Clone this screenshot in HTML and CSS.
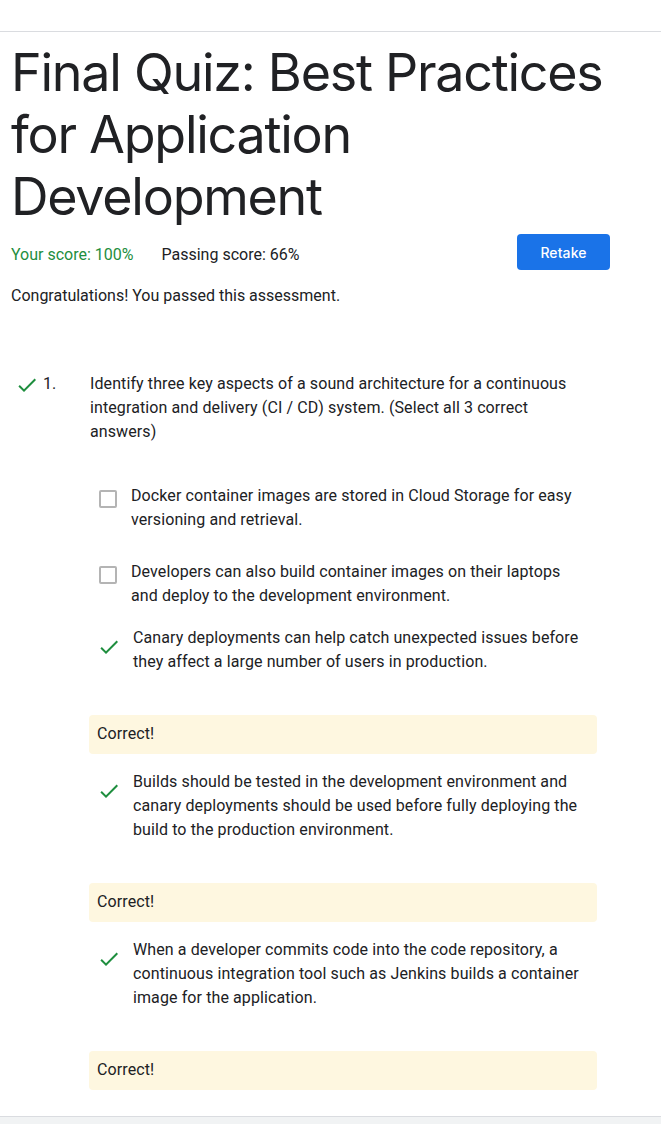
FILE: index.html
```html
<!DOCTYPE html>
<html lang="en">
<head>
<meta charset="utf-8">
<title>Final Quiz</title>
<link rel="stylesheet" href="styles.css">
</head>
<body>
<header class="topbar"></header>
<main class="page">
  <h1 class="title">Final Quiz: Best Practices for Application Development</h1>
  <div class="score-row">
    <div class="scores">
      <span class="score-yours">Your score: 100%</span>
      <span class="score-pass">Passing score: 66%</span>
    </div>
    <button class="btn-retake" type="button">Retake</button>
  </div>
  <p class="congrats">Congratulations! You passed this assessment.</p>

  <section class="question">
    <div class="q-head">
      <svg class="check q-check" viewBox="0 0 24 24" width="24" height="24"><path d="M9 16.17L4.83 12l-1.42 1.41L9 19 21 7l-1.41-1.41z"/></svg>
      <span class="q-num">1.</span>
    </div>
    <div class="q-body">
      <p class="q-text">Identify three key aspects of a sound architecture for a continuous integration and delivery (CI / CD) system. (Select all 3 correct answers)</p>
      <div class="options">
        <div class="opt unsel">
          <span class="opt-icon"><span class="box"></span></span>
          <span class="opt-text">Docker container images are stored in Cloud Storage for easy versioning and retrieval.</span>
        </div>
        <div class="opt unsel">
          <span class="opt-icon"><span class="box"></span></span>
          <span class="opt-text">Developers can also build container images on their laptops and deploy to the development environment.</span>
        </div>
        <div class="opt sel">
          <span class="opt-icon"><svg class="check" viewBox="0 0 24 24" width="24" height="24"><path d="M9 16.17L4.83 12l-1.42 1.41L9 19 21 7l-1.41-1.41z"/></svg></span>
          <span class="opt-text">Canary deployments can help catch unexpected issues before they affect a large number of users in production.</span>
        </div>
        <div class="feedback">Correct!</div>
        <div class="opt sel">
          <span class="opt-icon"><svg class="check" viewBox="0 0 24 24" width="24" height="24"><path d="M9 16.17L4.83 12l-1.42 1.41L9 19 21 7l-1.41-1.41z"/></svg></span>
          <span class="opt-text">Builds should be tested in the development environment and canary deployments should be used before fully deploying the build to the production environment.</span>
        </div>
        <div class="feedback">Correct!</div>
        <div class="opt sel">
          <span class="opt-icon"><svg class="check" viewBox="0 0 24 24" width="24" height="24"><path d="M9 16.17L4.83 12l-1.42 1.41L9 19 21 7l-1.41-1.41z"/></svg></span>
          <span class="opt-text">When a developer commits code into the code repository, a continuous integration tool such as Jenkins builds a container image for the application.</span>
        </div>
        <div class="feedback">Correct!</div>
      </div>
    </div>
  </section>
</main>
<footer class="bottombar"></footer>
</body>
</html>
```

FILE: styles.css
```css
* { box-sizing: border-box; }

html, body {
  margin: 0;
  padding: 0;
  background: #ffffff;
}

body {
  font-family: Roboto, "Liberation Sans", sans-serif;
  font-size: 16px;
  line-height: 24px;
  letter-spacing: 0.1px;
  color: #202124;
}

.topbar {
  height: 32px;
  border-bottom: 1px solid #dadce0;
}

.page {
  width: 661px;
  padding: 0 51px 26px 11px;
}

.title {
  margin: 10px 0 0;
  font-family: Inter, "Open Sans", sans-serif;
  font-weight: 400;
  font-size: 52px;
  line-height: 62px;
  letter-spacing: -1.25px;
  color: #202124;
}

.score-row {
  margin-top: 6px;
  display: flex;
  justify-content: space-between;
  align-items: flex-start;
}

.scores {
  padding-top: 9px;
  display: flex;
  gap: 28px;
  letter-spacing: 0;
}

.score-yours { color: #1e8e3e; }
.score-pass { color: #202124; }

.btn-retake {
  height: 36px;
  width: 93px;
  border: none;
  border-radius: 4px;
  background: #1a73e8;
  color: #ffffff;
  font-family: Inter, Roboto, sans-serif;
  font-weight: 500;
  font-size: 14px;
  letter-spacing: 0.1px;
  padding: 0;
}

.congrats {
  margin: 14px 0 0;
  letter-spacing: 0;
}

.question {
  margin-top: 64px;
  display: flex;
}

.q-head {
  width: 79px;
  flex: none;
  display: flex;
  align-items: flex-start;
}

.check {
  display: block;
  fill: #1e8e3e;
}

.q-check {
  margin-left: 4px;
  margin-top: 1px;
}

.q-num {
  margin-left: 4px;
}

.q-body {
  width: 507px;
  flex: none;
}

.q-text {
  margin: 0;
  padding-right: 13px;
}

.options {
  display: flex;
  flex-direction: column;
  margin-top: 40px;
  margin-left: -1px;
}

.opt {
  display: flex;
  align-items: flex-start;
  padding-right: 12px;
  margin-top: 16px;
}

.opt:first-child { margin-top: 0; }
.opt.unsel + .opt.unsel { margin-top: 28px; }
.opt.unsel + .opt.sel { margin-top: 18px; }

.opt-icon {
  flex: none;
  display: flex;
}

.unsel .opt-icon {
  width: 42px;
  padding-left: 10px;
  padding-top: 6px;
}

.sel .opt-icon {
  width: 44px;
  padding-left: 8px;
  padding-top: 9px;
}

.box {
  display: block;
  width: 18px;
  height: 18px;
  border: 2px solid #b4b4b4;
  border-radius: 2px;
}

.opt-text {
  flex: 1;
}

.feedback {
  margin-top: 41px;
  height: 39px;
  padding: 7px 8px;
  background: #fef7e0;
  border-radius: 4px;
}

.bottombar {
  height: 9px;
  border-top: 1px solid #dadce0;
  background: #f1f3f4;
}
```
